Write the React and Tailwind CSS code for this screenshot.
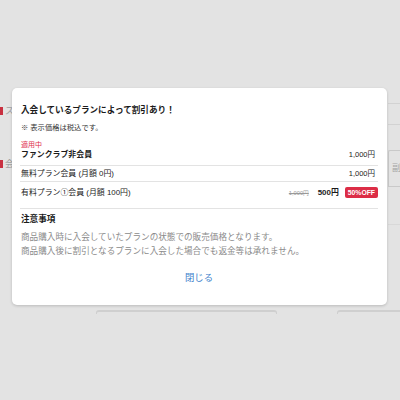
export default function App() {
  const font = { fontFamily: '"Liberation Sans","Noto Sans CJK JP",sans-serif' };
  return (
    <div className="relative w-[400px] h-[400px] overflow-hidden bg-[#e3e3e3]" style={font}>
      {/* page behind the overlay */}
      <div className="flex flex-col h-full">
        <div className="flex h-[310px]">
          <div className="w-[14px] pt-[107px] flex flex-col gap-[45px]">
            <div className="flex items-center gap-[2px] h-[8px]">
              <span className="block w-[6px] h-[8px] bg-[#c93141]" />
              <span className="text-[9px] leading-[8px] text-[#a0a0a0]">ス</span>
            </div>
            <div className="flex items-center gap-[2px] h-[8px]">
              <span className="block w-[6px] h-[8px] bg-[#c93141]" />
              <span className="text-[9px] leading-[8px] text-[#a0a0a0]">会</span>
            </div>
          </div>
          <div className="flex-1" />
          <div className="w-[12px] pt-[103px] flex flex-col">
            <div className="h-[21px] border-t border-[#d2d2d2]" />
            <div className="h-[26px] border-t border-[#d2d2d2]" />
            <div className="h-[37px] border-l border-t border-b border-[#c9c9c9] rounded-tl-[2px] flex items-center pl-[3px]">
              <span className="text-[9px] text-[#a8a8a8]">副</span>
            </div>
            <div className="h-[38px] border-b border-[#d8d8d8]" />
          </div>
        </div>
        <div className="flex">
          <div className="w-[96px] shrink-0" />
          <div className="w-[181px] shrink-0 h-[4px] border-t-2 border-x border-[#cfcfcf] rounded-t-[3px]" />
          <div className="w-[60px] shrink-0" />
          <div className="w-[80px] shrink-0 h-[4px] border-t-2 border-x border-[#cfcfcf] rounded-t-[3px]" />
        </div>
      </div>

      {/* modal */}
      <div className="absolute left-[12px] top-[88px] w-[375px] bg-white rounded-[5px] shadow-[0_1px_3px_rgba(0,0,0,0.18)] pt-[16px] pb-[21px] pl-[8px] pr-[9px] text-[#1a1a1a]">
        <div className="text-[8.6px] leading-[12px] font-bold pl-[1px]">入会しているプランによって割引あり！</div>
        <div className="mt-[7px] text-[7.3px] leading-[10px] text-[#333] pl-[1px]">※ 表示価格は税込です。</div>

        <div className="mt-[7px] border-b border-[#e3e3e3] pb-[5px] pl-[1px]">
          <div className="text-[7px] leading-[9px] text-[#e0304c]">適用中</div>
          <div className="flex justify-between items-center leading-[11px]">
            <span className="text-[7.9px] font-bold">ファンクラブ非会員</span>
            <span className="text-[7.5px] text-[#222] pr-[3px]">1,000円</span>
          </div>
        </div>

        <div className="flex justify-between items-center leading-[11px] pt-[2px] pb-[2px] border-b border-[#e3e3e3] pl-[1px]">
          <span className="text-[7.9px] text-[#222]">無料プラン会員 (月額 0円)</span>
          <span className="text-[7.5px] text-[#222] pr-[3px]">1,000円</span>
        </div>

        <div className="flex justify-between items-center pt-[5px] pb-[10px] border-b border-[#e3e3e3] pl-[1px]">
          <span className="text-[7.9px] leading-[11px] text-[#222]">有料プラン①会員 (月額 100円)</span>
          <div className="flex items-center">
            <span className="text-[5.7px] leading-[8px] text-[#999] line-through">1,000円</span>
            <span className="ml-[9px] text-[7.9px] leading-[11px] font-bold">500円</span>
            <span className="ml-[6px] h-[11px] px-[3px] rounded-[2px] bg-[#dc2d46] text-white font-bold text-[6.8px] leading-[11px]">50%OFF</span>
          </div>
        </div>

        <div className="pt-[4px] pl-[1px]">
          <div className="text-[8.6px] leading-[12px] font-bold">注意事項</div>
          <div className="mt-[5px] text-[8.6px] leading-[14px] text-[#8a8a8a]">
            <div>商品購入時に入会していたプランの状態での販売価格となります。</div>
            <div>商品購入後に割引となるプランに入会した場合でも返金等は承れません。</div>
          </div>
        </div>

        <div className="mt-[14px] flex justify-center">
          <span className="text-[9.4px] leading-[12px] text-[#3f84cc]">閉じる</span>
        </div>
      </div>
    </div>
  );
}
